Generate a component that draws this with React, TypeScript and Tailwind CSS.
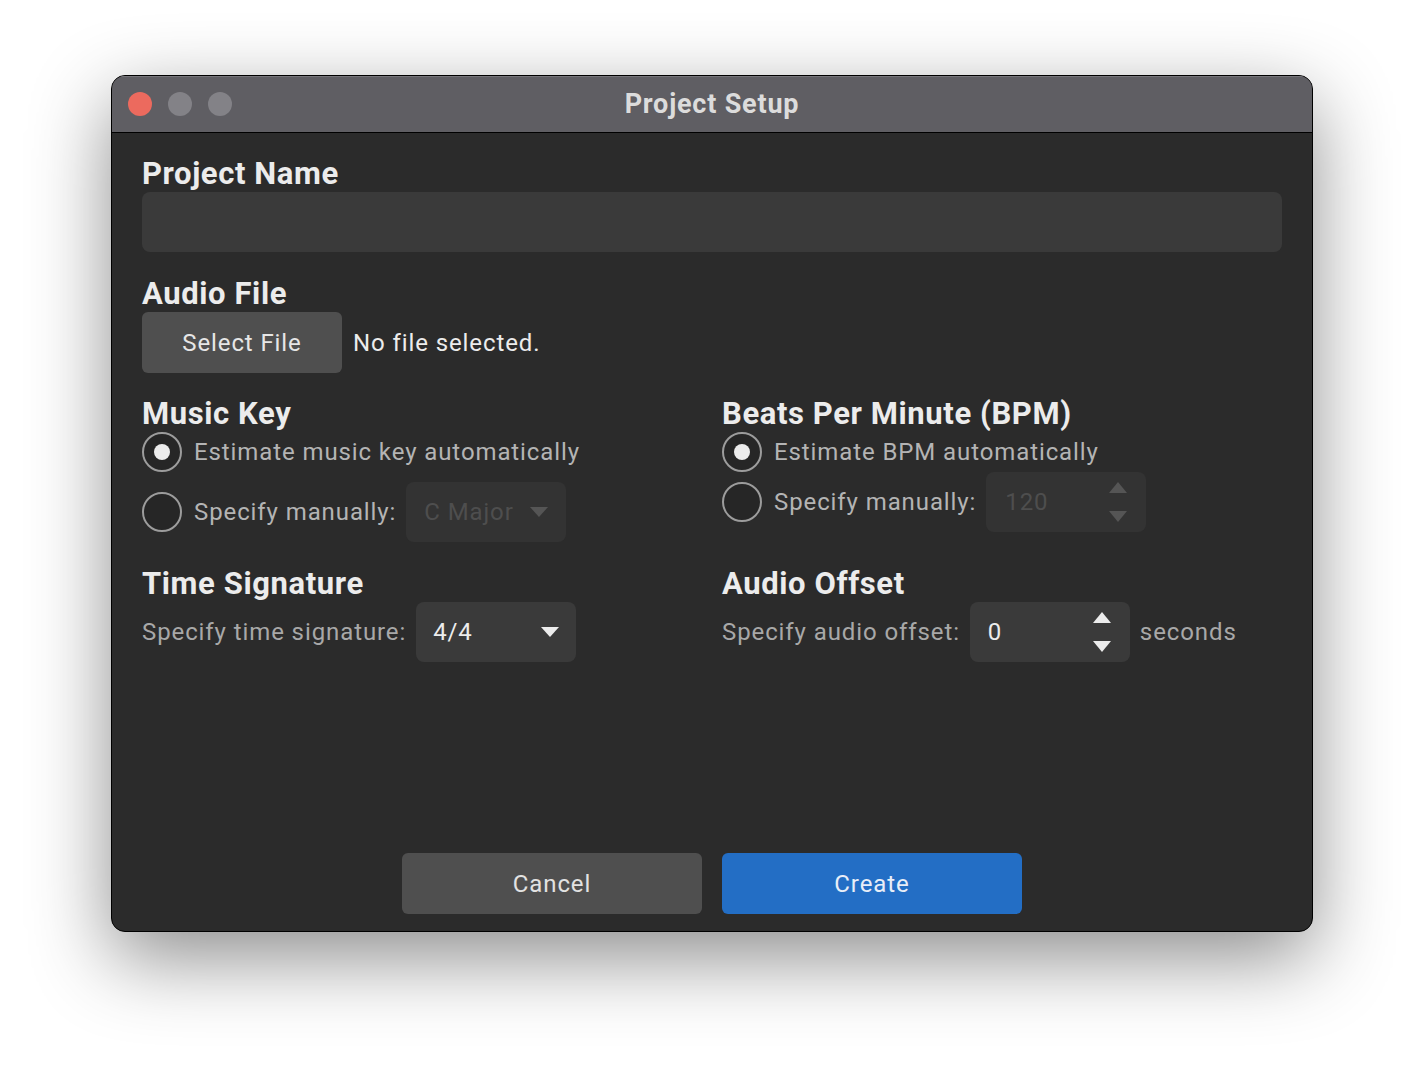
import React from "react";

const FONT = { fontFamily: "Roboto, 'Noto Sans', 'Liberation Sans', sans-serif" };

function Heading({ children }: { children: React.ReactNode }) {
  return <h2 className="text-[31px] leading-[36px] font-bold tracking-[0.6px] text-[#ececec]">{children}</h2>;
}

function Radio({ checked }: { checked?: boolean }) {
  return (
    <span className="flex h-[40px] w-[40px] shrink-0 items-center justify-center rounded-full border-2 border-[#9c9c9c] bg-[#262626]">
      {checked && <span className="h-[16px] w-[16px] rounded-full bg-[#ececec]" />}
    </span>
  );
}

function Caret({ color }: { color: string }) {
  return (
    <svg width="18" height="10" viewBox="0 0 18 10">
      <path d="M0 0 L18 0 L9 10 Z" fill={color} />
    </svg>
  );
}

function Spinner({ color }: { color: string }) {
  return (
    <div className="flex flex-col items-center gap-[18px]">
      <svg width="18" height="11" viewBox="0 0 18 11">
        <path d="M9 0 L18 11 L0 11 Z" fill={color} />
      </svg>
      <svg width="18" height="11" viewBox="0 0 18 11">
        <path d="M0 0 L18 0 L9 11 Z" fill={color} />
      </svg>
    </div>
  );
}

export default function App() {
  return (
    <div className="flex h-[1080px] w-[1424px] items-start bg-white pl-[111px] pt-[75px]" style={FONT}>
      <div className="flex h-[857px] w-[1202px] flex-col overflow-hidden rounded-[14px] border border-black bg-[#2b2b2b] shadow-[0_26px_80px_rgba(0,0,0,0.45)]">
        {/* title bar */}
        <div className="relative flex h-[57px] shrink-0 items-center border-b border-black border-t border-t-[#77767b] bg-[#5f5e63] pb-[1px]">
          <div className="flex items-center gap-[16px] pl-[16px]">
            <span className="h-[24px] w-[24px] rounded-full bg-[#ec6a5e]" />
            <span className="h-[24px] w-[24px] rounded-full bg-[#838287]" />
            <span className="h-[24px] w-[24px] rounded-full bg-[#838287]" />
          </div>
          <div className="absolute inset-x-0 top-[11px] text-center text-[27px] leading-[32px] font-bold tracking-[0.8px] text-[#dcdcdc]">
            Project Setup
          </div>
        </div>

        {/* body */}
        <div className="flex flex-1 flex-col px-[30px] pb-[17px] pt-[23px] tracking-[0.9px]">
          <Heading>Project Name</Heading>
          <div className="h-[60px] rounded-[8px] bg-[#3a3a3a]" />

          <div className="mt-[24px]">
            <Heading>Audio File</Heading>
          </div>
          <div className="flex items-center gap-[11px]">
            <button className="h-[61px] w-[200px] rounded-[6px] bg-[#4f4f4f] text-[24px] text-[#e6e6e6]">
              Select File
            </button>
            <span className="text-[24px] text-[#ececec]">No file selected.</span>
          </div>

          <div className="mt-[23px] grid grid-cols-[580px_1fr]">
            {/* Music key */}
            <div className="flex flex-col">
              <Heading>Music Key</Heading>
              <div className="flex h-[40px] items-center gap-[12px]">
                <Radio checked />
                <span className="text-[24px] text-[#b4b4b4]">Estimate music key automatically</span>
              </div>
              <div className="mt-[10px] flex h-[60px] items-center gap-[12px]">
                <Radio />
                <span className="-mr-[2px] text-[24px] text-[#b4b4b4]">Specify manually:</span>
                <div className="flex h-[60px] w-[160px] items-center justify-between rounded-[8px] bg-[#333333] pl-[18px] pr-[18px]">
                  <span className="text-[24px] text-[#4e4e4e]">C Major</span>
                  <Caret color="#555555" />
                </div>
              </div>
            </div>

            {/* BPM */}
            <div className="flex flex-col">
              <Heading>Beats Per Minute (BPM)</Heading>
              <div className="flex h-[40px] items-center gap-[12px]">
                <Radio checked />
                <span className="text-[24px] text-[#b4b4b4]">Estimate BPM automatically</span>
              </div>
              <div className="flex h-[60px] items-center gap-[12px]">
                <Radio />
                <span className="-mr-[2px] text-[24px] text-[#b4b4b4]">Specify manually:</span>
                <div className="flex h-[60px] w-[160px] items-center justify-between rounded-[8px] bg-[#333333] pl-[19px] pr-[19px]">
                  <span className="text-[24px] text-[#4e4e4e]">120</span>
                  <Spinner color="#555555" />
                </div>
              </div>
            </div>
          </div>

          <div className="mt-[24px] grid grid-cols-[580px_1fr]">
            {/* Time signature */}
            <div className="flex flex-col">
              <Heading>Time Signature</Heading>
              <div className="flex items-center gap-[10px]">
                <span className="text-[24px] text-[#a8a8a8]">Specify time signature:</span>
                <div className="flex h-[60px] w-[160px] items-center justify-between rounded-[8px] bg-[#3a3a3a] pl-[17px] pr-[17px]">
                  <span className="text-[24px] text-[#ececec]">4/4</span>
                  <Caret color="#ececec" />
                </div>
              </div>
            </div>

            {/* Audio offset */}
            <div className="flex flex-col">
              <Heading>Audio Offset</Heading>
              <div className="flex items-center gap-[10px]">
                <span className="text-[24px] text-[#a8a8a8]">Specify audio offset:</span>
                <div className="flex h-[60px] w-[160px] items-center justify-between rounded-[8px] bg-[#3a3a3a] pl-[18px] pr-[19px]">
                  <span className="text-[24px] text-[#ececec]">0</span>
                  <Spinner color="#ececec" />
                </div>
                <span className="text-[24px] text-[#a8a8a8]">seconds</span>
              </div>
            </div>
          </div>

          <div className="mt-auto flex justify-center gap-[20px]">
            <button className="h-[61px] w-[300px] rounded-[6px] bg-[#4f4f4f] text-[24px] text-[#e2e2e2]">
              Cancel
            </button>
            <button className="h-[61px] w-[300px] rounded-[6px] bg-[#236ec5] text-[24px] text-[#e8eef8]">
              Create
            </button>
          </div>
        </div>
      </div>
    </div>
  );
}
